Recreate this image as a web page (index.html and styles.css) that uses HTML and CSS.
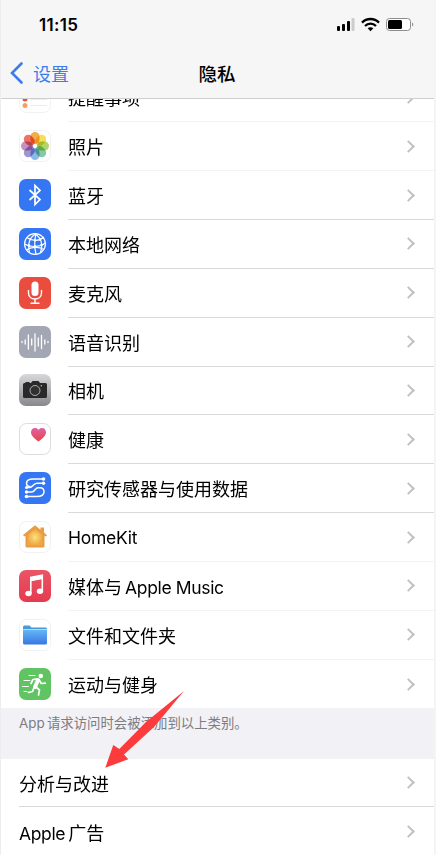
FILE: index.html
```
<!DOCTYPE html>
<html lang="zh-CN">
<head>
  <meta charset="UTF-8">
  <meta name="viewport" content="width=device-width, initial-scale=1.0">
  <title>隐私</title>
  <link rel="stylesheet" href="styles.css">
</head>
<body>
  <div class="phone">
    <header class="header">
      <div class="status-bar">
        <span class="time">11:15</span>
        <svg class="status-icons" width="80" height="16" viewBox="0 0 80 16">
          <rect x="2" y="9" width="3" height="5" rx="1"/>
          <rect x="7" y="7" width="3" height="7" rx="1"/>
          <rect x="12" y="4" width="3" height="10" rx="1"/>
          <rect x="16.5" y="1" width="3" height="13" rx="1" fill="#ccc"/>
          <g fill="none" stroke="#000" stroke-width="2.3">
            <path d="M27 5.6c4.7-4.8 12.3-4.8 17 0"/>
            <path d="M30 9c3-3.2 8-3.2 11 0"/>
          </g>
          <path d="M32.7 11.3c1.5-1.5 4.1-1.5 5.6 0l-2.8 2.9z"/>
          <rect x="51.5" y="1.5" width="24" height="12" rx="3" fill="#fff" stroke="#8d8d8d"/>
          <rect x="53" y="3" width="14" height="9" rx="1.5"/>
          <path d="M77 5.5c1.7.5 1.7 3.5 0 4z" fill="#999"/>
        </svg>
      </div>
      <nav class="nav">
        <a class="back">
          <svg width="14" height="22" viewBox="0 0 14 22"><path d="M12.500 1.500L3 11l9.500 9.500"/></svg>
          <span>设置</span>
        </a>
        <h1>隐私</h1>
      </nav>
    </header>

    <main class="content">
      <ul class="list">
        <li class="row faint">
          <svg class="icon" viewBox="0 0 32 32">
            <rect class="tile" x=".5" y=".5" width="31" height="31" rx="7"/>
            <circle cx="6" cy="11.500" r="2.500" fill="#4a86ee"/><circle cx="6" cy="18" r="2.500" fill="#eb5045"/><circle cx="6" cy="24.500" r="2.500" fill="#f3a15b"/>
            <path d="M11 12.500h17M11 18.500h17M11 24.500h17" stroke="#ececec"/>
          </svg>
          <div class="label"><span>提醒事项</span><i class="chevron"></i></div>
        </li>
        <li class="row faint">
          <svg class="icon photos" viewBox="0 0 32 32">
            <rect class="tile" x=".5" y=".5" width="31" height="31" rx="7"/>
            <rect x="11.500" y="2" width="9" height="12" rx="4.500" fill="#f2a33a"/>
            <rect x="11.500" y="2" width="9" height="12" rx="4.500" fill="#f3dc48" transform="rotate(45 16 16)"/>
            <rect x="11.500" y="2" width="9" height="12" rx="4.500" fill="#a9d05c" transform="rotate(90 16 16)"/>
            <rect x="11.500" y="2" width="9" height="12" rx="4.500" fill="#78c598" transform="rotate(135 16 16)"/>
            <rect x="11.500" y="2" width="9" height="12" rx="4.500" fill="#80b2e6" transform="rotate(180 16 16)"/>
            <rect x="11.500" y="2" width="9" height="12" rx="4.500" fill="#978acb" transform="rotate(225 16 16)"/>
            <rect x="11.500" y="2" width="9" height="12" rx="4.500" fill="#c284b6" transform="rotate(270 16 16)"/>
            <rect x="11.500" y="2" width="9" height="12" rx="4.500" fill="#ec6352" transform="rotate(315 16 16)"/>
          </svg>
          <div class="label"><span>照片</span><i class="chevron"></i></div>
        </li>
        <li class="row">
          <svg class="icon" viewBox="0 0 32 32">
            <rect width="32" height="32" rx="7" fill="#3577f2"/>
            <path d="M10.500 11l10.500 9.500-5 5v-19l5 5-10.500 9.500" fill="none" stroke="#fff" stroke-width="1.700"/>
          </svg>
          <div class="label"><span>蓝牙</span><i class="chevron"></i></div>
        </li>
        <li class="row">
          <svg class="icon" viewBox="0 0 32 32">
            <rect width="32" height="32" rx="7" fill="#3577f2"/>
            <g fill="none" stroke="#fff" stroke-width="1.200">
              <circle cx="16" cy="16" r="10.400"/>
              <path d="M17 5.700C11 9 8.500 16 10.500 24.500M16 5.700c6 4 8 11 5.500 18.800M17 5.700c-1.500 6-1.500 14 0 20.600M8 9.500c5 4 12 4 17-.5M5.700 16c5 3.500 15 3.500 20.500-1M7.500 22c4-3 12-4 17.500-.5"/>
            </g>
            <g fill="#fff"><circle cx="10" cy="17.500" r="1.300"/><circle cx="16" cy="18.500" r="1.300"/><circle cx="22.500" cy="17" r="1.300"/><circle cx="16" cy="12.300" r="1.100"/></g>
          </svg>
          <div class="label"><span>本地网络</span><i class="chevron"></i></div>
        </li>
        <li class="row">
          <svg class="icon" viewBox="0 0 32 32">
            <rect width="32" height="32" rx="7" fill="#ea4d3d"/>
            <rect x="12.500" y="4.500" width="7" height="14.500" rx="3.500" fill="#fff"/>
            <path d="M9.500 13v3c0 8 13 8 13 0v-3M16 22v4M11.500 26.300h9" fill="none" stroke="#fff" stroke-width="1.400"/>
          </svg>
          <div class="label"><span>麦克风</span><i class="chevron"></i></div>
        </li>
        <li class="row">
          <svg class="icon" viewBox="0 0 32 32">
            <rect width="32" height="32" rx="7" fill="#a2a7b3"/>
            <path d="M3 15.500v1M6.200 14v4M9.400 9v14M12.700 13v6M16 8v17M19.300 12v8M22.500 9.500v13M25.800 14v4M29 15.500v1" stroke="#fff" stroke-width="1.300" stroke-linecap="round"/>
          </svg>
          <div class="label"><span>语音识别</span><i class="chevron"></i></div>
        </li>
        <li class="row">
          <svg class="icon" viewBox="0 0 32 32">
            <defs><linearGradient id="camera" x2="0" y2="1"><stop stop-color="#d8d8da"/><stop offset="1" stop-color="#89898d"/></linearGradient></defs>
            <rect width="32" height="32" rx="7" fill="url(#camera)"/>
            <path d="M5.500 9h1v-1h4v1h1.500l1.500-2h6l1.500 2h5.500q1.500 0 1.500 1.500v12q0 1.500-1.500 1.500h-21q-1.500 0-1.500-1.500v-12q0-1.500 1.500-1.500z" fill="#292929"/>
            <circle cx="16" cy="16.500" r="5" fill="#303030" stroke="#bbb" stroke-width=".9"/>
            <circle cx="22.300" cy="11.800" r=".8" fill="#e0b552"/>
          </svg>
          <div class="label"><span>相机</span><i class="chevron"></i></div>
        </li>
        <li class="row">
          <svg class="icon" viewBox="0 0 32 32">
            <defs><linearGradient id="heart" x2="0" y2="1"><stop stop-color="#df62a4"/><stop offset="1" stop-color="#ea4447"/></linearGradient></defs>
            <rect class="tile edge" x=".5" y=".5" width="31" height="31" rx="7"/>
            <path d="M19.500 18.500c-4-3-7.500-5.700-7.500-9.300 0-4.500 5.300-5.600 7.500-2.200 2.200-3.400 7.500-2.300 7.500 2.200 0 3.600-3.500 6.300-7.500 9.300z" fill="url(#heart)"/>
          </svg>
          <div class="label"><span>健康</span><i class="chevron"></i></div>
        </li>
        <li class="row">
          <svg class="icon" viewBox="0 0 32 32">
            <rect width="32" height="32" rx="7" fill="#3577f2"/>
            <g fill="none" stroke="#fff" stroke-width="1.500">
              <path d="M24.500 7H14.500c-4 0-7 1.500-7 4.200 0 2.300 2 3.300 4 3.300"/>
              <path d="M24.500 11.200H18c-4 0-4 4.300-7.500 4.300h-3"/>
              <path d="M7.500 24.500H17.500c4 0 7.500-1.500 7.500-4.800 0-2.700-2-4-4-4h-2c-3 0-3 4.300-6.500 4.300h-5"/>
            </g>
            <g fill="#fff"><circle cx="24.500" cy="7" r="1.800"/><circle cx="24.500" cy="11.200" r="1.700"/><circle cx="7.500" cy="15.500" r="1.500"/><circle cx="7.500" cy="20" r="1.700"/><circle cx="7.500" cy="24.500" r="1.800"/></g>
          </svg>
          <div class="label"><span>研究传感器与使用数据</span><i class="chevron"></i></div>
        </li>
        <li class="row faint">
          <svg class="icon" viewBox="0 0 32 32">
            <defs><radialGradient id="home"><stop stop-color="#fbe378"/><stop offset="1" stop-color="#efa646"/></radialGradient></defs>
            <rect class="tile" x=".5" y=".5" width="31" height="31" rx="7"/>
            <path d="M4 14L16 4.200l5.500 4.500V6.500h3.500V11.500l3 2.700-1.200 1.300-1.300-.8V25q0 1.500-1.500 1.500H8q-1.500 0-1.500-1.500V14.800l-1.300.7z" fill="#e99c43"/>
            <path d="M16 8l7.500 6v10.500h-15V14z" fill="url(#home)"/>
          </svg>
          <div class="label"><span><b>HomeKit</b></span><i class="chevron"></i></div>
        </li>
        <li class="row faint">
          <svg class="icon" viewBox="0 0 32 32">
            <defs><linearGradient id="music" x2="0" y2="1"><stop stop-color="#eb5566"/><stop offset="1" stop-color="#e53a50"/></linearGradient></defs>
            <rect width="32" height="32" rx="7" fill="url(#music)"/>
            <path d="M11.800 23V7.500l11.500-2.300v15.500M11.800 10.500l11.500-2.300" fill="none" stroke="#fff" stroke-width="1.600"/>
            <path d="M11 7.500l13-2.700v3.700l-13 2.700z" fill="#fff"/>
            <ellipse cx="9.500" cy="23.500" rx="3.200" ry="2.700" fill="#fff"/><ellipse cx="21" cy="21.300" rx="3.200" ry="2.700" fill="#fff"/>
          </svg>
          <div class="label"><span class="mixed">媒体与 <b>Apple Music</b></span><i class="chevron"></i></div>
        </li>
        <li class="row faint">
          <svg class="icon" viewBox="0 0 32 32">
            <defs><linearGradient id="folder" x2="0" y2="1"><stop stop-color="#66b8f5"/><stop offset="1" stop-color="#3777e5"/></linearGradient></defs>
            <rect class="tile" x=".5" y=".5" width="31" height="31" rx="7"/>
            <path d="M4 10V8q0-1.500 1.500-1.500h5l2 2h14Q28 8.500 28 10z" fill="#4799d8"/>
            <path d="M4 10.500h24V24q0 1.500-1.500 1.500h-21Q4 25.500 4 24z" fill="url(#folder)"/>
          </svg>
          <div class="label"><span>文件和文件夹</span><i class="chevron"></i></div>
        </li>
        <li class="row">
          <svg class="icon" viewBox="0 0 32 32">
            <rect width="32" height="32" rx="7" fill="#61c462"/>
            <circle cx="21.800" cy="8" r="2.300" fill="#fff"/>
            <g fill="none" stroke="#fff" stroke-linecap="round" stroke-linejoin="round">
              <path d="M19 12l-3 7" stroke-width="4"/>
              <path d="M18.500 10.800l-4.500.7-2 4M20.300 12.200l2 3.300 4-.3M17 19l3.500 3-1 5M15 19.500l-1.500 4-4 1" stroke-width="1.700"/>
              <path d="M10 7.500h6M5 12.500h6M3.500 18.500h6M5 23.500h3" stroke-width="1"/>
            </g>
          </svg>
          <div class="label"><span>运动与健身</span><i class="chevron"></i></div>
        </li>
      </ul>

      <p class="note"><b>App</b> 请求访问时会被添加到以上类别。</p>

      <ul class="list">
        <li class="row plain"><div class="label"><span>分析与改进</span><i class="chevron"></i></div></li>
        <li class="row plain"><div class="label"><span class="mixed"><b>Apple</b> 广告</span><i class="chevron"></i></div></li>
      </ul>
    </main>

    <!-- red pointer over the list -->
    <svg class="arrow" width="80" height="78" viewBox="0 0 80 78">
      <path d="M80 0L50 36 20 63.500l4.300 4.800L1.300 76.700 9.300 54l6 4L42 31z" fill="#fb3b3c"/>
    </svg>
  </div>
</body>
</html>
```
FILE: styles.css
```
* {
  box-sizing: border-box;
}

body {
  margin: 0;
  background: #f6f6f6;
  color: #000;
  font-family: Inter, "Noto Sans CJK SC", sans-serif;
}

.phone {
  position: relative;
  display: flex;
  flex-direction: column;
  width: 435px;
  height: 855px;
  overflow: hidden;
  background: #fff;
  border-left: 1px solid #ededee;
  border-right: 1px solid #f3f3f3;
}

.header {
  position: relative;
  z-index: 1;
  flex: none;
  height: 99px;
  background: #f6f6f6;
  border-bottom: 1px solid #cfcfd0;
}

.status-bar {
  display: flex;
  justify-content: space-between;
  align-items: center;
  height: 49px;
  padding: 0 19px 0 38px;
}

.time {
  font-size: 17px;
  font-weight: 600;
  letter-spacing: 0.3px;
}

.nav {
  display: grid;
  grid-template-columns: 1fr auto 1fr;
  align-items: center;
  height: 47px;
  padding-left: 8px;
  padding-right: 9px;
}

.nav h1 {
  margin: 0;
  font-size: 18.5px;
  font-weight: 500;
}

.back {
  display: flex;
  align-items: center;
  gap: 10px;
  color: #3f7ceb;
  font-size: 18px;
}

.back path {
  fill: none;
  stroke: #3f7ceb;
  stroke-width: 2.6;
  stroke-linecap: round;
}

.content {
  margin-top: -25.5px;
}

.list {
  list-style: none;
  margin: 0;
  padding: 0;
}

.row {
  display: flex;
  align-items: center;
  height: 48.85px;
  padding-left: 18px;
}

.icon {
  flex: none;
  width: 32px;
  height: 32px;
  margin: 0 17px 1px 0;
}

.tile {
  fill: #fff;
  stroke: #f1f1f1;
}

.edge {
  stroke: #dcdcdc;
}

.photos rect:not(.tile) {
  mix-blend-mode: multiply;
  opacity: 0.9;
}

.label {
  flex: 1;
  display: flex;
  justify-content: space-between;
  align-items: center;
  height: 100%;
  padding-right: 21px;
  border-bottom: 1px solid #dadadb;
  font-size: 18px;
  white-space: nowrap;
}

.faint .label {
  border-bottom-color: #f3f3f3;
}

.row:last-child .label {
  border-bottom: none;
}

.label b,
.note b {
  font-weight: 400;
}

.label b {
  font-size: 17.5px;
  letter-spacing: -0.25px;
}

.mixed {
  word-spacing: -2px;
}

.mixed b {
  letter-spacing: -0.35px;
  word-spacing: 0;
}

.chevron {
  width: 9px;
  height: 9px;
  border-top: 2px solid #c1c1c4;
  border-right: 2px solid #c1c1c4;
  transform: rotate(45deg);
}

.note {
  position: relative;
  height: 51px;
  margin: -0.5px 0 0;
  padding: 5px 18px 0;
  background: #f1f1f6;
  color: #7c7c82;
  font-size: 13.4px;
  line-height: 20px;
  word-spacing: -1.5px;
}

.plain {
  height: 48.4px;
}

.arrow {
  position: absolute;
  left: 103px;
  top: 691px;
}
```
